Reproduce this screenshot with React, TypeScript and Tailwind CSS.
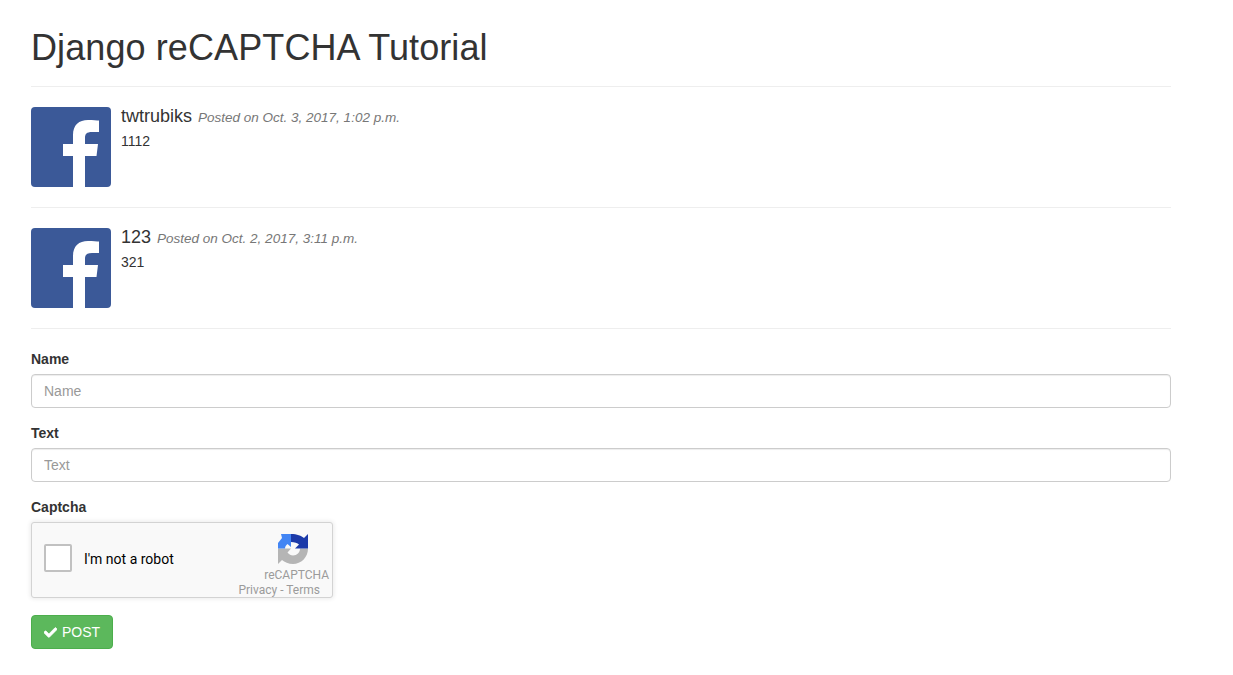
import React from 'react';
import { FaCheck } from 'react-icons/fa';

const comments = [
  { name: 'twtrubiks', date: 'Posted on Oct. 3, 2017, 1:02 p.m.', text: '1112' },
  { name: '123', date: 'Posted on Oct. 2, 2017, 3:11 p.m.', text: '321' },
];

const FacebookAvatar = () => (
  <svg width="80" height="80" viewBox="0 0 80 80" className="shrink-0 rounded-[4px]">
    <rect width="80" height="80" fill="#3b5998" />
    <path
      d="M42 80V49H32V37H42V28C42 18 48 13 57 13C62 13 66 13.300 68 13.600V25H61C55.500 25 54 27 54 31V37H67L65.500 49H54V80Z"
      fill="#ffffff"
    />
  </svg>
);

const RecaptchaLogo = () => (
  <svg width="30" height="30" viewBox="0 0 30 30">
    <path d="M30 14.500C30 23.500 23 30 15 30C10.500 30 6.500 28 4 26L0 30V14.500H13L9.500 18.500C11 20.500 13 21.500 15 21.500C19 21.500 22 18.500 22 14.500Z" fill="#b5b5b5" />
    <path d="M0 14.500V9L4 4L3 0H13V13L9.500 10C8 11 7 13 7 14.500Z" fill="#4285f4" />
    <path d="M13 0C19 0 23.500 2 26 4L30 0V14.500H17L21 10.500C19.500 9 16.500 8 13 8Z" fill="#1c3aa9" />
  </svg>
);

const Field = ({ label }: { label: string }) => (
  <div className="mb-[15px]">
    <label className="mb-[5px] block text-[14px] font-bold leading-[20px]">{label}</label>
    <input
      type="text"
      placeholder={label}
      className="block h-[34px] w-full rounded-[4px] border border-[#cccccc] bg-white px-3 py-1.5 text-[14px] leading-[20px] text-[#555555] shadow-[inset_0_1px_1px_rgba(0,0,0,0.075)] outline-none placeholder:text-[#999999]"
    />
  </div>
);

export default function App() {
  return (
    <div className="min-h-[675px] bg-white font-['Liberation_Sans',Arial,sans-serif] text-[14px] leading-[20px] text-[#333333]">
      <div className="ml-[31px] w-[1140px]">
        <h1 className="pt-[28px] pb-[18px] text-[36px] leading-[40px] font-normal tracking-[0.1px]">Django reCAPTCHA Tutorial</h1>

        {comments.map(c => (
          <React.Fragment key={c.name}>
            <hr className="mb-5 border-0 border-t border-[#eeeeee]" />
            <div className="mb-5 flex h-[80px] gap-2.5">
              <FacebookAvatar />
              <div>
                <h4 className="mt-[-1px] mb-[3px] text-[18px] leading-[20px] font-normal">
                  {c.name}{' '}
                  <small className="ml-[1px] text-[13.5px] italic text-[#777777]">{c.date}</small>
                </h4>
                <p>{c.text}</p>
              </div>
            </div>
          </React.Fragment>
        ))}
        <hr className="mb-5 border-0 border-t border-[#eeeeee]" />

        <Field label="Name" />
        <Field label="Text" />

        <div className="mb-[17px]">
          <label className="mb-[5px] block text-[14px] font-bold leading-[20px]">Captcha</label>
          <div className="flex h-[76px] w-[302px] items-start rounded-[3px] border border-[#d3d3d3] bg-[#f9f9f9] font-['Roboto',sans-serif] shadow-[0_0_4px_1px_rgba(0,0,0,0.08)]">
            <div className="ml-3 mt-[21px] h-7 w-7 rounded-[2px] border-2 border-[#c1c1c1] bg-white" />
            <span className="ml-3 mt-[26px] text-[14px] leading-[20px] text-black">I&apos;m not a robot</span>
            <div className="ml-auto mr-[3px] flex flex-col items-end">
              <div className="mr-[21px] mt-[11px]">
                <RecaptchaLogo />
              </div>
              <span className="mt-[3px] text-[12px] leading-[16px] text-[#9b9b9b]">reCAPTCHA</span>
              <span className="mr-[9px] mt-[-1px] whitespace-nowrap text-[12px] leading-[16px] text-[#9b9b9b]">Privacy - Terms</span>
            </div>
          </div>
        </div>

        <button className="flex h-[34px] w-[82px] items-center justify-center gap-[5px] rounded-[4px] border border-[#4cae4c] bg-[#5cb85c] text-[14px] text-white">
          <FaCheck className="h-[13px] w-[13px] stroke-[30]" />
          POST
        </button>
      </div>
    </div>
  );
}
